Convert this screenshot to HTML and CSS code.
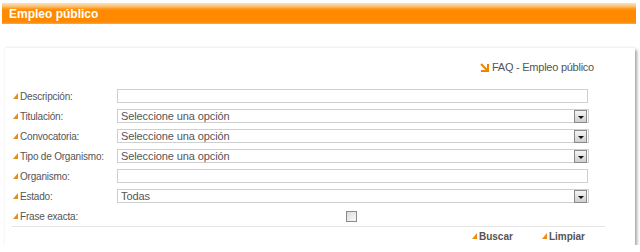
FILE: index.html
```html
<!DOCTYPE html>
<html>
<head>
    <meta charset="UTF-8">
    <title>Empleo público</title>
    <link rel="stylesheet" href="styles.css">
</head>
<body>
    <div id="titleBar">Empleo público</div>

    <div id="searchPanel">
        <div class="faq">
            <svg class="faqArrow" width="9" height="9" viewBox="0 0 9 9">
                <path d="M1 1 L7 7 M1 8 H8 V1" stroke="#f08300" stroke-width="2" fill="none"/>
            </svg>
            <a href="#" class="faqLink">FAQ - Empleo público</a>
        </div>

        <div class="searchForm">
            <div class="formRow">
                <span class="fieldLabel"><i class="mark"></i>Descripción:</span>
                <div class="textBox"></div>
            </div>
            <div class="formRow">
                <span class="fieldLabel"><i class="mark"></i>Titulación:</span>
                <div class="selectBox"><span>Seleccione una opción</span><b class="dropBtn"></b></div>
            </div>
            <div class="formRow">
                <span class="fieldLabel"><i class="mark"></i>Convocatoria:</span>
                <div class="selectBox"><span>Seleccione una opción</span><b class="dropBtn"></b></div>
            </div>
            <div class="formRow">
                <span class="fieldLabel"><i class="mark"></i>Tipo de Organismo:</span>
                <div class="selectBox"><span>Seleccione una opción</span><b class="dropBtn"></b></div>
            </div>
            <div class="formRow">
                <span class="fieldLabel"><i class="mark"></i>Organismo:</span>
                <div class="textBox"></div>
            </div>
            <div class="formRow">
                <span class="fieldLabel"><i class="mark"></i>Estado:</span>
                <div class="selectBox"><span>Todas</span><b class="dropBtn"></b></div>
            </div>
            <div class="formRow">
                <span class="fieldLabel"><i class="mark"></i>Frase exacta:</span>
                <div class="checkCell"><span class="checkBox"></span></div>
            </div>
        </div>

        <div class="actions">
            <a href="#" class="actionLink"><i class="mark"></i>Buscar</a>
            <a href="#" class="actionLink"><i class="mark"></i>Limpiar</a>
        </div>
    </div>
</body>
</html>
```

FILE: styles.css
```css
body {
    margin:0;
    background-color:white;
    font-family:"Liberation Sans", Arial, Helvetica, sans-serif;
    font-size:11px;
    color:#555;
}
#titleBar {
    margin:3px 4px 0 2px;
    height:21px;
    line-height:23px;
    padding-left:7px;
    background:linear-gradient(#fbe2bd 0px, #fcc480 3px, #ff9410 6px, #ff8a00 8px, #ff8a00 19px, #f9a848 21px);
    color:white;
    font-size:12px;
    font-weight:bold;
}
#searchPanel {
    margin:24px 5px 0 5px;
    height:197px;
    background-color:white;
    box-shadow:2px 2px 3px rgba(0, 0, 0, 0.35), 0 -1px 2px rgba(0, 0, 0, 0.06);
}
.faq {
    display:flex;
    justify-content:flex-end;
    align-items:center;
    gap:3px;
    padding:12px 41px 0 0;
    height:14px;
}
.faqLink {
    color:#555;
    text-decoration:none;
    font-size:11px;
    letter-spacing:-0.25px;
}
.searchForm {
    margin-top:12px;
    padding-left:8px;
}
.formRow {
    display:grid;
    grid-template-columns:104px 471px;
    align-items:center;
    height:20px;
}
.fieldLabel {
    display:flex;
    align-items:center;
    font-size:10px;
    letter-spacing:-0.2px;
}
.mark {
    display:inline-block;
    width:0;
    height:0;
    border-left:5px solid transparent;
    border-bottom:6px solid #f08a10;
    margin-right:2px;
    margin-top:-1px;
}
.textBox {
    height:12px;
    border:1px solid #cfcfcf;
    background-color:white;
}
.selectBox {
    display:flex;
    justify-content:space-between;
    align-items:center;
    width:467px;
    height:12px;
    border:1px solid #cfcfcf;
    background-color:white;
    padding-left:3px;
    letter-spacing:-0.1px;
}
.dropBtn {
    position:relative;
    width:11px;
    height:11px;
    margin-right:1px;
    border:1px solid #8a8a8a;
    background:linear-gradient(#f4f4f4, #cfcfcf);
}
.dropBtn::after {
    content:"";
    position:absolute;
    left:3px;
    top:5px;
    border-left:3px solid transparent;
    border-right:3px solid transparent;
    border-top:3px solid #111;
}
.checkCell {
    display:flex;
    padding-left:229px;
}
.checkBox {
    width:9px;
    height:9px;
    border:1px solid #8a8a8a;
    background:linear-gradient(135deg, #dcdcdc, #fafafa);
}
.actions {
    display:flex;
    justify-content:flex-end;
    gap:29px;
    margin:0 30px 0 7px;
    padding:4px 20px 0 0;
    border-top:1px solid #e4e4e4;
}
.actionLink {
    display:flex;
    align-items:center;
    color:#555;
    font-size:10px;
    font-weight:bold;
    text-decoration:none;
}
```
